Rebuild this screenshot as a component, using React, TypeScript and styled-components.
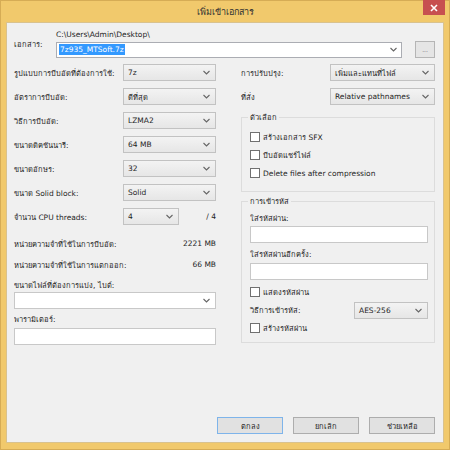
import React from "react";
import styled, { createGlobalStyle } from "styled-components";

const GlobalStyle = createGlobalStyle`
  html, body {
    margin: 0;
    padding: 0;
    background: #ffffff;
  }
  body {
    font-family: "DejaVu Sans", Tahoma, "Liberation Sans", sans-serif;
    font-size: 7.5px;
    color: #1e1e1e;
  }
`;

const Window = styled.div`
  width: 450px;
  height: 450px;
  box-sizing: border-box;
  background: #f1c96c;
  border: 1px solid #d6ac55;
  display: flex;
  flex-direction: column;
`;

const TitleBar = styled.div`
  position: relative;
  height: 21px;
  flex-shrink: 0;
  display: flex;
  align-items: center;
  justify-content: center;
  font-size: 9px;
  color: #333333;
`;

const CloseButton = styled.div`
  position: absolute;
  top: -1px;
  right: 4px;
  width: 22px;
  height: 15px;
  background: #c75050;
  display: flex;
  align-items: center;
  justify-content: center;
`;

const Client = styled.div`
  flex: 1;
  margin: 0 5px 6px 5px;
  background: #f0f0f0;
  border: 1px solid #d9c28e;
  padding: 6px 8px 8px 7px;
  display: flex;
  flex-direction: column;
`;

const ArchiveRow = styled.div`
  display: grid;
  grid-template-columns: 42px 346px 13px 20px;
  grid-template-rows: 12px 17px;
  align-items: center;
`;

const ArchiveLabel = styled.div`
  grid-row: 1 / 3;
  grid-column: 1;
`;

const PathText = styled.div`
  grid-row: 1;
  grid-column: 2;
  line-height: 12px;
`;

const EditCombo = styled.div`
  grid-row: 2;
  grid-column: 2;
  height: 16px;
  box-sizing: border-box;
  background: #ffffff;
  border: 1px solid #abadb3;
  display: flex;
  align-items: center;
  justify-content: space-between;
  padding: 0 4px 0 2px;
`;

const Selected = styled.span`
  background: #3399ff;
  color: #ffffff;
  line-height: 11px;
  padding: 0 1px;
`;

const BrowseButton = styled.div`
  grid-row: 2;
  grid-column: 4;
  height: 17px;
  box-sizing: border-box;
  background: #e5e5e5;
  border: 1px solid #b5b5b5;
  display: flex;
  align-items: center;
  justify-content: center;
  font-size: 6px;
  color: #666;
`;

const Columns = styled.div`
  margin-top: 6px;
  display: grid;
  grid-template-columns: 202px 194px;
  column-gap: 25px;
  align-items: start;
`;

const Column = styled.div`
  display: flex;
  flex-direction: column;
`;

const FormGrid = styled.div<{ $label: number }>`
  display: grid;
  grid-template-columns: ${(p) => p.$label}px 1fr;
  grid-auto-rows: 17px;
  row-gap: 7px;
  align-items: center;
`;

const Combo = styled.div<{ $width?: number }>`
  height: 17px;
  box-sizing: border-box;
  width: ${(p) => (p.$width ? `${p.$width}px` : "100%")};
  background: linear-gradient(#f3f3f3, #e6e6e6);
  border: 1px solid #c2c2c2;
  display: flex;
  align-items: center;
  justify-content: space-between;
  padding: 0 5px 0 4px;
  white-space: nowrap;
`;

const WhiteCombo = styled(Combo)`
  background: #ffffff;
  border-color: #c8c8c8;
`;

const CpuCell = styled.div`
  display: flex;
  align-items: center;
  justify-content: space-between;
`;

const InfoRow = styled.div`
  height: 21px;
  display: flex;
  align-items: center;
  justify-content: space-between;
`;

const InfoBlock = styled.div`
  margin-top: 8px;
`;

const FieldLabel = styled.div<{ $top: number }>`
  margin-top: ${(p) => p.$top}px;
  height: 13px;
  line-height: 13px;
  overflow: hidden;
`;

const TextBox = styled.div<{ $top: number }>`
  margin-top: ${(p) => p.$top}px;
  height: 17px;
  box-sizing: border-box;
  background: #ffffff;
  border: 1px solid #c8c8c8;
`;

const Group = styled.fieldset<{ $top: number }>`
  margin: ${(p) => p.$top}px 0 0 0;
  padding: 0 6px 0 8px;
  border: 1px solid #dcdcdc;
  min-width: 0;
`;

const Legend = styled.legend`
  padding: 0 2px;
  margin-left: -2px;
  height: 13px;
  line-height: 13px;
  overflow: hidden;
`;

const CheckRow = styled.label`
  height: 18px;
  display: flex;
  align-items: center;
  gap: 3px;
`;

const CheckBox = styled.span`
  width: 10px;
  height: 10px;
  box-sizing: border-box;
  background: #ffffff;
  border: 1px solid #707070;
  flex-shrink: 0;
`;

const CheckList = styled.div`
  padding: 4px 0 9px 0;
`;

const CryptBody = styled.div`
  padding: 4px 0 5px 0;
`;

const CheckSpacer = styled.div`
  margin-top: 3px;
`;

const MethodRow = styled.div`
  height: 18px;
  display: flex;
  align-items: center;
  justify-content: space-between;
`;

const ButtonRow = styled.div`
  margin-top: auto;
  display: flex;
  justify-content: flex-end;
  gap: 10px;
`;

const Button = styled.div<{ $default?: boolean }>`
  width: 66px;
  height: 17px;
  box-sizing: border-box;
  background: #e1e1e1;
  border: 1px solid ${(p) => (p.$default ? "#7eb4ea" : "#adadad")};
  display: flex;
  align-items: center;
  justify-content: center;
`;

const Chevron = () => (
  <svg width="7" height="5" viewBox="0 0 7 5">
    <polyline points="0.5,1 3.5,4 6.5,1" fill="none" stroke="#666" strokeWidth="1.1" />
  </svg>
);

const Check = ({ text }: { text: string }) => (
  <CheckRow>
    <CheckBox />
    <span>{text}</span>
  </CheckRow>
);

const leftRows: [string, string][] = [
  ["รูปแบบการบีบอัดที่ต้องการใช้:", "7z"],
  ["อัตราการบีบอัด:", "ดีที่สุด"],
  ["วิธีการบีบอัด:", "LZMA2"],
  ["ขนาดดิคชันนารี:", "64 MB"],
  ["ขนาดอักษร:", "32"],
  ["ขนาด Solid block:", "Solid"],
];

export default function App() {
  return (
    <>
      <GlobalStyle />
      <Window>
        <TitleBar>
          เพิ่มเข้าเอกสาร
          <CloseButton>
            <svg width="8" height="8" viewBox="0 0 8 8">
              <path d="M1 1L7 7M7 1L1 7" stroke="#fff" strokeWidth="1.6" />
            </svg>
          </CloseButton>
        </TitleBar>
        <Client>
          <ArchiveRow>
            <ArchiveLabel>เอกสาร:</ArchiveLabel>
            <PathText>C:\Users\Admin\Desktop\</PathText>
            <EditCombo>
              <Selected>7z935_MTSoft.7z</Selected>
              <Chevron />
            </EditCombo>
            <BrowseButton>...</BrowseButton>
          </ArchiveRow>

          <Columns>
            <Column>
              <FormGrid $label={109}>
                {leftRows.map(([label, value]) => (
                  <React.Fragment key={label}>
                    <span>{label}</span>
                    <Combo>
                      <span>{value}</span>
                      <Chevron />
                    </Combo>
                  </React.Fragment>
                ))}
                <span>จำนวน CPU threads:</span>
                <CpuCell>
                  <Combo $width={56}>
                    <span>4</span>
                    <Chevron />
                  </Combo>
                  <span>/ 4</span>
                </CpuCell>
              </FormGrid>
              <InfoBlock>
                <InfoRow>
                  <span>หน่วยความจำที่ใช้ในการบีบอัด:</span>
                  <span>2221 MB</span>
                </InfoRow>
                <InfoRow>
                  <span>หน่วยความจำที่ใช้ในการแตกออก:</span>
                  <span>66 MB</span>
                </InfoRow>
              </InfoBlock>
              <FieldLabel $top={4}>ขนาดไฟล์ที่ต้องการแบ่ง, ไบต์:</FieldLabel>
              <WhiteCombo>
                <span />
                <Chevron />
              </WhiteCombo>
              <FieldLabel $top={4}>พารามิเตอร์:</FieldLabel>
              <TextBox $top={2} />
            </Column>

            <Column>
              <FormGrid $label={89}>
                <span>การปรับปรุง:</span>
                <Combo>
                  <span>เพิ่มและแทนที่ไฟล์</span>
                  <Chevron />
                </Combo>
                <span>ที่สั่ง</span>
                <Combo>
                  <span>Relative pathnames</span>
                  <Chevron />
                </Combo>
              </FormGrid>
              <Group $top={6}>
                <Legend>ตัวเลือก</Legend>
                <CheckList>
                  <Check text="สร้างเอกสาร SFX" />
                  <Check text="บีบอัดแชร์ไฟล์" />
                  <Check text="Delete files after compression" />
                </CheckList>
              </Group>
              <Group $top={3}>
                <Legend>การเข้ารหัส</Legend>
                <CryptBody>
                  <FieldLabel $top={0}>ใส่รหัสผ่าน:</FieldLabel>
                  <TextBox $top={1} />
                  <FieldLabel $top={5}>ใส่รหัสผ่านอีกครั้ง:</FieldLabel>
                  <TextBox $top={2} />
                  <CheckSpacer>
                    <Check text="แสดงรหัสผ่าน" />
                  </CheckSpacer>
                  <MethodRow>
                    <span>วิธีการเข้ารหัส:</span>
                    <Combo $width={74}>
                      <span>AES-256</span>
                      <Chevron />
                    </Combo>
                  </MethodRow>
                  <Check text="สร้างรหัสผ่าน" />
                </CryptBody>
              </Group>
            </Column>
          </Columns>

          <ButtonRow>
            <Button $default>ตกลง</Button>
            <Button>ยกเลิก</Button>
            <Button>ช่วยเหลือ</Button>
          </ButtonRow>
        </Client>
      </Window>
    </>
  );
}
